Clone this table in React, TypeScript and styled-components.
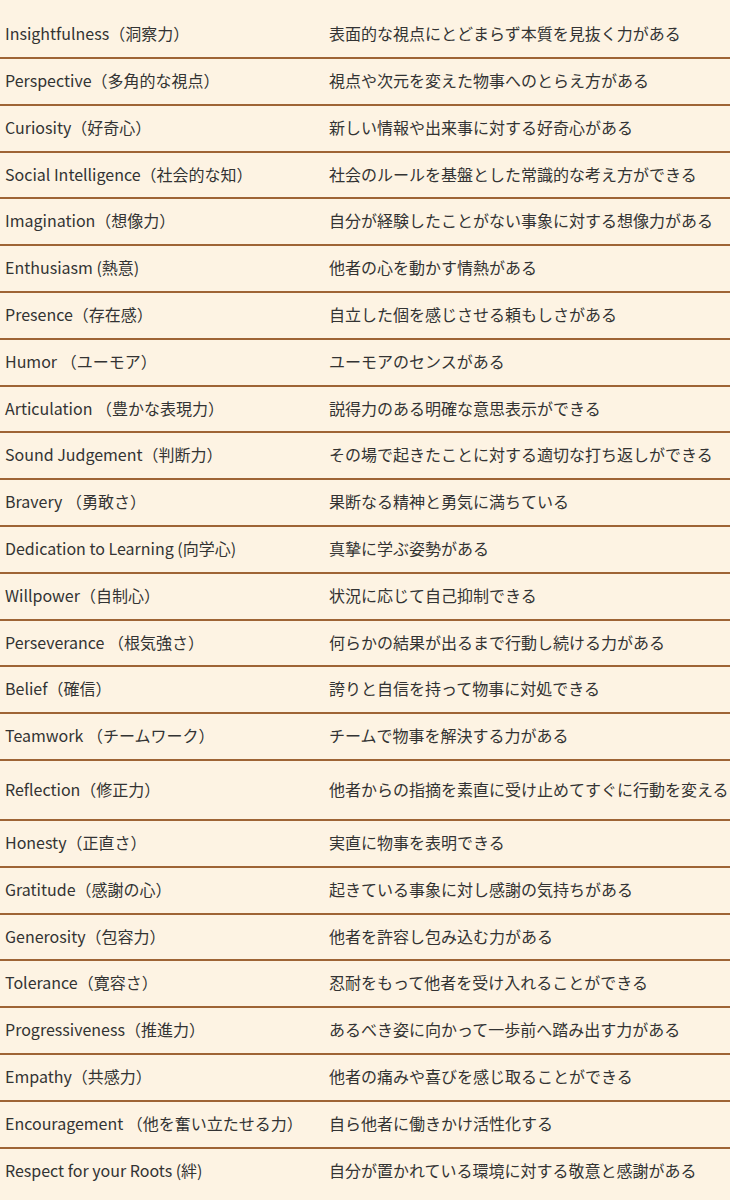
import styled, { createGlobalStyle } from "styled-components";

interface Trait {
  name: string;
  description: string;
  tall?: boolean;
}

const traits: Trait[] = [
  { name: "Insightfulness（洞察力）", description: "表面的な視点にとどまらず本質を見抜く力がある" },
  { name: "Perspective（多角的な視点）", description: "視点や次元を変えた物事へのとらえ方がある" },
  { name: "Curiosity（好奇心）", description: "新しい情報や出来事に対する好奇心がある" },
  { name: "Social Intelligence（社会的な知）", description: "社会のルールを基盤とした常識的な考え方ができる" },
  { name: "Imagination（想像力）", description: "自分が経験したことがない事象に対する想像力がある" },
  { name: "Enthusiasm (熱意)", description: "他者の心を動かす情熱がある" },
  { name: "Presence（存在感）", description: "自立した個を感じさせる頼もしさがある" },
  { name: "Humor （ユーモア）", description: "ユーモアのセンスがある" },
  { name: "Articulation （豊かな表現力）", description: "説得力のある明確な意思表示ができる" },
  { name: "Sound Judgement（判断力）", description: "その場で起きたことに対する適切な打ち返しができる" },
  { name: "Bravery （勇敢さ）", description: "果断なる精神と勇気に満ちている" },
  { name: "Dedication to Learning (向学心)", description: "真摯に学ぶ姿勢がある" },
  { name: "Willpower（自制心）", description: "状況に応じて自己抑制できる" },
  { name: "Perseverance （根気強さ）", description: "何らかの結果が出るまで行動し続ける力がある" },
  { name: "Belief（確信）", description: "誇りと自信を持って物事に対処できる" },
  { name: "Teamwork （チームワーク）", description: "チームで物事を解決する力がある" },
  { name: "Reflection（修正力）", description: "他者からの指摘を素直に受け止めてすぐに行動を変える", tall: true },
  { name: "Honesty（正直さ）", description: "実直に物事を表明できる" },
  { name: "Gratitude（感謝の心）", description: "起きている事象に対し感謝の気持ちがある" },
  { name: "Generosity（包容力）", description: "他者を許容し包み込む力がある" },
  { name: "Tolerance（寛容さ）", description: "忍耐をもって他者を受け入れることができる" },
  { name: "Progressiveness（推進力）", description: "あるべき姿に向かって一歩前へ踏み出す力がある" },
  { name: "Empathy（共感力）", description: "他者の痛みや喜びを感じ取ることができる" },
  { name: "Encouragement （他を奮い立たせる力）", description: "自ら他者に働きかけ活性化する" },
  { name: "Respect for your Roots (絆)", description: "自分が置かれている環境に対する敬意と感謝がある" },
];

const GlobalStyle = createGlobalStyle`
  html, body {
    margin: 0;
    padding: 0;
    background: #fdf3e3;
  }
  body {
    font-family: "Noto Sans CJK JP", "Noto Sans", sans-serif;
    color: #333333;
  }
`;

const Page = styled.div`
  width: 730px;
  height: 1200px;
  overflow: hidden;
  padding-top: 12.2px;
  box-sizing: border-box;
  background: #fdf3e3;
`;

const Table = styled.div`
  display: flex;
  flex-direction: column;
`;

const Row = styled.div<{ $tall?: boolean }>`
  display: grid;
  grid-template-columns: 324px 1fr;
  align-items: center;
  min-height: ${({ $tall }) => ($tall ? "58px" : "44.8px")};
  border-bottom: 2px solid #9e6435;

  &:last-child {
    border-bottom: none;
  }
`;

const Cell = styled.div`
  padding: 7px 0 9px 5px;
  font-size: 16px;
  line-height: 28.8px;
  white-space: nowrap;
`;

export default function App() {
  return (
    <Page>
      <GlobalStyle />
      <Table>
        {traits.map(trait => (
          <Row key={trait.name} $tall={trait.tall}>
            <Cell>{trait.name}</Cell>
            <Cell>{trait.description}</Cell>
          </Row>
        ))}
      </Table>
    </Page>
  );
}
